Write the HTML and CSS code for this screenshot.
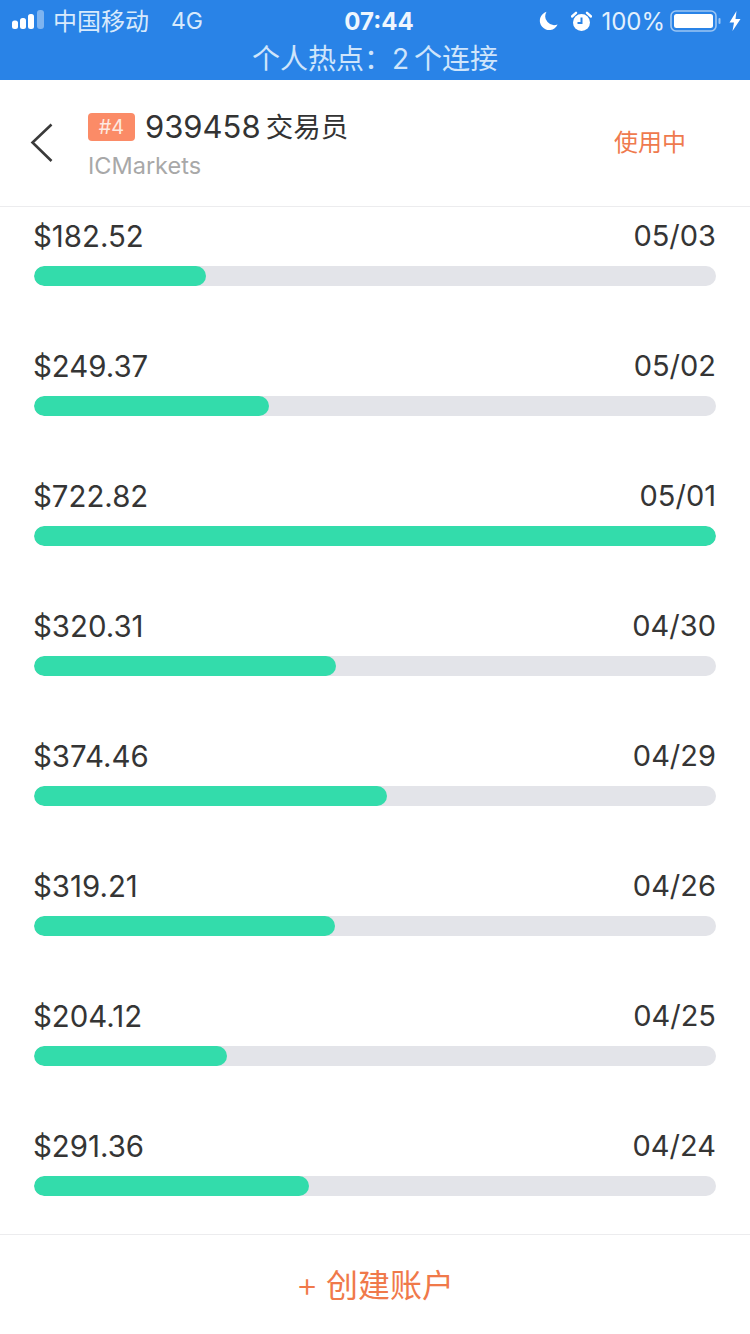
FILE: index.html
```html
<!DOCTYPE html>
<html lang="zh">
<head>
<meta charset="utf-8">
<title>939458 交易员</title>
<link rel="stylesheet" href="styles.css">
</head>
<body>
<div class="app">
  <div class="status">
    <div class="status-row">
      <div class="status-left">
        <svg class="signal" width="33" height="24" viewBox="0 0 33 24">
          <rect x="0" y="11.5" width="6" height="8.5" rx="2.5" fill="#fff"/>
          <rect x="8" y="9" width="6" height="11" rx="2.5" fill="#fff"/>
          <rect x="16" y="5" width="6" height="15" rx="2.5" fill="#fff"/>
          <rect x="25" y="1" width="7" height="19" rx="3" fill="#fff" opacity=".4"/>
        </svg>
        <span class="carrier">中国移动</span>
        <span class="net">4G</span>
      </div>
      <div class="time">07:44</div>
      <div class="status-right">
        <svg class="moon" width="19" height="20" viewBox="0 0 19 20"><path d="M7.5 0.8A9.3 9.3 0 1 0 18.6 13.6 9 9 0 0 1 7.5 0.8Z" fill="#fff"/></svg>
        <svg class="alarm" width="21" height="21" viewBox="0 0 21 21">
          <circle cx="10.5" cy="11.5" r="8.5" fill="#fff"/>
          <path d="M10.5 6.5V12H6.5" fill="none" stroke="#2983e7" stroke-width="2"/>
          <path d="M1 5.5 5 1.8M20 5.5 16 1.8" stroke="#fff" stroke-width="2.4" stroke-linecap="round"/>
        </svg>
        <span class="pct">100%</span>
        <svg class="battery" width="52" height="22" viewBox="0 0 52 22">
          <rect x="1" y="1" width="45" height="20" rx="5" fill="none" stroke="#9cc6f4" stroke-width="1.6"/>
          <rect x="4" y="4" width="39" height="14" rx="2.5" fill="#fff"/>
          <rect x="48.5" y="8" width="2" height="6" rx="1" fill="#9cc6f4"/>
        </svg>
        <svg class="bolt" width="12" height="20" viewBox="0 0 12 20"><path d="M7.5 0 0.5 11.5H5L3.5 20 11.5 8H6.5Z" fill="#fff"/></svg>
      </div>
    </div>
    <div class="hotspot">个人热点：2 个连接</div>
  </div>

  <header class="header">
    <button class="back" aria-label="返回">
      <svg width="24" height="40" viewBox="0 0 24 40"><path d="M21.5 1.5 2.5 19.5 21.5 38" fill="none" stroke="#3a3a3a" stroke-width="2.6"/></svg>
    </button>
    <div class="account">
      <div class="account-title">
        <span class="badge">#4</span>
        <span class="number">939458</span>
        <span class="role">交易员</span>
      </div>
      <div class="broker">ICMarkets</div>
    </div>
    <div class="state">使用中</div>
  </header>

  <main class="list">
    <div class="row"><div class="row-text"><span class="amount">$182.52</span><span>05/03</span></div><div class="track"><div class="fill" style="width:25.25%"></div></div></div>
    <div class="row"><div class="row-text"><span class="amount">$249.37</span><span>05/02</span></div><div class="track"><div class="fill" style="width:34.5%"></div></div></div>
    <div class="row"><div class="row-text"><span class="amount">$722.82</span><span>05/01</span></div><div class="track"><div class="fill" style="width:100%"></div></div></div>
    <div class="row"><div class="row-text"><span class="amount">$320.31</span><span>04/30</span></div><div class="track"><div class="fill" style="width:44.3%"></div></div></div>
    <div class="row"><div class="row-text"><span class="amount">$374.46</span><span>04/29</span></div><div class="track"><div class="fill" style="width:51.8%"></div></div></div>
    <div class="row"><div class="row-text"><span class="amount">$319.21</span><span>04/26</span></div><div class="track"><div class="fill" style="width:44.16%"></div></div></div>
    <div class="row"><div class="row-text"><span class="amount">$204.12</span><span>04/25</span></div><div class="track"><div class="fill" style="width:28.24%"></div></div></div>
    <div class="row"><div class="row-text"><span class="amount">$291.36</span><span>04/24</span></div><div class="track"><div class="fill" style="width:40.31%"></div></div></div>
  </main>

  <footer class="footer"><span class="plus">+</span><span class="create">创建账户</span></footer>
</div>
</body>
</html>
```
FILE: styles.css
```css
* { box-sizing: border-box; }
html, body { margin: 0; padding: 0; }
body {
  width: 750px;
  height: 1334px;
  overflow: hidden;
  background: #fff;
  font-family: Inter, "Noto Sans CJK SC", sans-serif;
}
.app { display: flex; flex-direction: column; height: 1334px; }

.status { height: 80px; flex: none; background: #2983e7; color: #fff; }
.status-row {
  height: 42px;
  display: grid;
  grid-template-columns: 1fr auto 1fr;
  align-items: center;
  padding: 0 9px 0 12px;
}
.status-left, .status-right { display: flex; align-items: center; }
.status-right { justify-content: flex-end; }
.signal { margin-right: 8px; }
.carrier { font-size: 24px; line-height: 30px; color: #d8eafc; transform: translateY(1px); }
.net { font-size: 23px; margin-left: 22px; color: #d8eafc; }
.time { font-size: 24px; font-weight: 700; margin-left: 5px; color: #eef6fe; }
.moon { margin-right: 13px; }
.alarm { margin-right: 9px; }
.pct { font-size: 24px; color: #e3f0fd; margin-right: 5px; }
.battery { margin-right: 7px; }
.hotspot {
  text-align: center;
  font-size: 28px;
  line-height: 34px;
  word-spacing: -3px;
  color: #cfe5fb;
}

.header {
  height: 127px;
  flex: none;
  display: flex;
  align-items: center;
  padding: 0 64px 0 30px;
  border-bottom: 1px solid #ececee;
}
.back {
  width: 58px;
  flex: none;
  padding: 0;
  border: 0;
  background: none;
  display: flex;
  margin-top: -1px;
}
.account { flex: 1; margin-top: 2px; }
.account-title { display: flex; align-items: center; height: 38px; }
.badge {
  width: 47px;
  height: 28px;
  border-radius: 4px;
  background: #fb8b67;
  color: #fde9e1;
  font-size: 20px;
  line-height: 28px;
  text-align: center;
  margin-right: 10px;
}
.number { font-size: 31px; color: #333; margin-right: 5px; }
.role { font-size: 27.5px; color: #333; transform: translateY(-2px); }
.broker { font-size: 23.5px; line-height: 30px; color: #a8a8a8; margin-top: 5px; }
.state { font-size: 24px; color: #ef7a4e; transform: translateY(-3px); }

.list { flex: 1; overflow: hidden; padding: 9px 34px 0; min-height: 0; }
.row { height: 130px; }
.row-text {
  display: flex;
  justify-content: space-between;
  height: 40px;
  line-height: 40px;
  font-size: 29px;
  color: #353535;
  margin-bottom: 10px;
}
.amount { font-size: 29.4px; margin-left: -1px; line-height: 42px; }
.track { height: 20px; border-radius: 10px; background: #e3e4e9; overflow: hidden; }
.fill { height: 100%; border-radius: 10px; background: #33dcab; }

.footer {
  height: 100px;
  flex: none;
  border-top: 1px solid #ececee;
  display: flex;
  justify-content: center;
  align-items: center;
  color: #f0794a;
}
.plus { font-size: 34px; font-weight: 300; margin-right: 8px; }
.create { font-size: 32px; transform: translateY(-2px); }
```
